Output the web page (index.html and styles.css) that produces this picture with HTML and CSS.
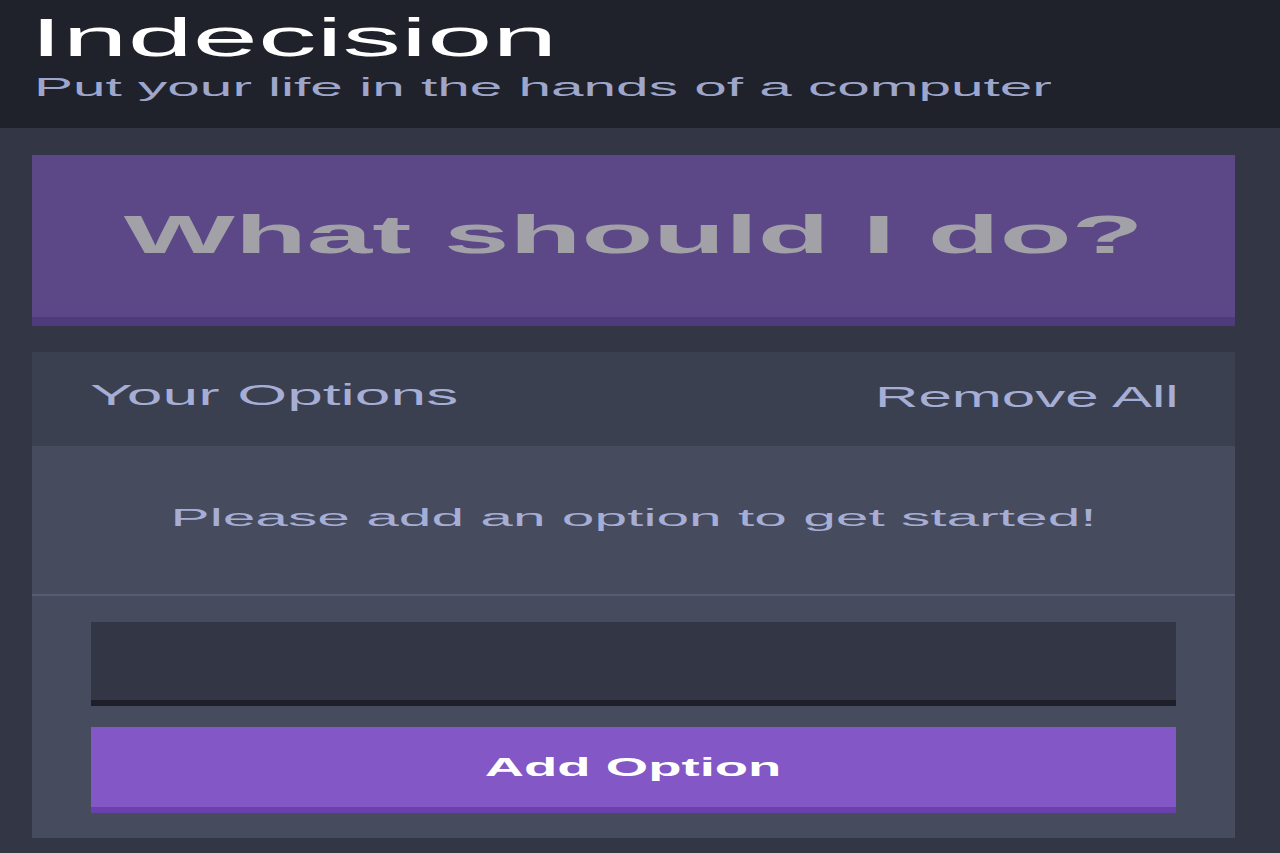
FILE: index.html
```html
<!DOCTYPE html>
<html lang="en">
<head>
<meta charset="utf-8">
<title>Indecision</title>
<link rel="stylesheet" href="styles.css">
</head>
<body>
  <header class="header">
    <h1 class="header__title"><span class="stretch stretch--title">Indecision</span></h1>
    <h2 class="header__subtitle"><span class="stretch stretch--subtitle">Put your life in the hands of a computer</span></h2>
  </header>
  <main class="container">
    <button class="big-button" type="button"><span class="stretch stretch--big">What should I do?</span></button>
    <section class="widget">
      <div class="widget-header">
        <h3 class="widget-header__title"><span class="stretch stretch--options">Your Options</span></h3>
        <button class="link-button" type="button"><span class="stretch stretch--remove">Remove All</span></button>
      </div>
      <p class="widget__message"><span class="stretch stretch--message">Please add an option to get started!</span></p>
      <form class="add-option" onsubmit="return false;">
        <input class="add-option__input" type="text" name="option" aria-label="Option">
        <button class="button" type="submit"><span class="stretch stretch--add">Add Option</span></button>
      </form>
    </section>
  </main>
</body>
</html>
```

FILE: styles.css
```css
* {
  box-sizing: border-box;
}

html, body {
  margin: 0;
  padding: 0;
}

body {
  background: #333644;
  font-family: "Liberation Sans", Arial, sans-serif;
  height: 853px;
  overflow: hidden;
}

.stretch {
  display: inline-block;
  white-space: nowrap;
  line-height: 1;
}

/* Header */
.header {
  background: #20222b;
  height: 128px;
  padding: 11px 32px 0 32px;
}

.header__title {
  margin: 0 0 0 -2px;
  font-size: 53px;
  font-weight: 400;
  line-height: 53px;
  color: #ffffff;
}

.stretch--title {
  transform: scaleX(2.21);
  transform-origin: left center;
}

.header__subtitle {
  margin: 11px 0 0 2px;
  font-size: 25px;
  font-weight: 400;
  line-height: 25px;
  color: #9ea6cc;
}

.stretch--subtitle {
  transform: scaleX(2.34);
  transform-origin: left center;
}

/* Main */
.container {
  width: 1203px;
  margin-left: 32px;
  padding-top: 27px;
}

.big-button {
  display: block;
  width: 100%;
  height: 171px;
  margin: 0;
  padding: 53px 0 56px 0;
  border: none;
  border-bottom: 9px solid #4f3b7b;
  background: #5c4886;
  color: #a1a1a7;
  font-family: inherit;
  font-size: 53px;
  font-weight: 700;
  line-height: 53px;
  text-align: center;
}

.stretch--big {
  transform: scaleX(2.22);
  transform-origin: center center;
}

/* Widget */
.widget {
  margin-top: 26px;
  background: #464b5e;
}

.widget-header {
  display: flex;
  justify-content: space-between;
  align-items: flex-start;
  height: 94px;
  padding: 29px 56px 0 58px;
  background: #3b4050;
}

.widget-header__title {
  margin: 0;
  font-size: 29px;
  font-weight: 400;
  line-height: 29px;
  color: #a6aed6;
}

.stretch--options {
  transform: scaleX(2.21);
  transform-origin: left center;
}

.link-button {
  margin: 2px 0 0 0;
  padding: 0;
  border: none;
  background: none;
  color: #a6aed6;
  font-family: inherit;
  font-size: 29px;
  line-height: 29px;
}

.stretch--remove {
  transform: scaleX(2.07);
  transform-origin: right center;
}

.widget__message {
  margin: 0;
  height: 150px;
  padding-top: 61px;
  border-bottom: 2px solid #575c73;
  font-size: 23px;
  line-height: 23px;
  color: #a6aed6;
  text-align: center;
}

.stretch--message {
  transform: scaleX(2.55);
  transform-origin: center center;
}

.add-option {
  display: flex;
  flex-direction: column;
  gap: 21px;
  padding: 26px 59px 25px 59px;
}

.add-option__input {
  display: block;
  width: 100%;
  height: 84px;
  margin: 0;
  padding: 0 16px;
  border: none;
  border-bottom: 6px solid #1e1f28;
  background: #333645;
  color: #a6aed6;
  font-family: inherit;
  font-size: 25px;
  outline: none;
}

.button {
  display: block;
  width: 100%;
  height: 86px;
  margin: 0;
  padding: 0;
  border: none;
  border-bottom: 6px solid #6a40ac;
  background: #8357c5;
  color: #ffffff;
  font-family: inherit;
  font-size: 25px;
  font-weight: 700;
  line-height: 25px;
  text-align: center;
}

.stretch--add {
  transform: scaleX(2.18);
  transform-origin: center center;
}
```
